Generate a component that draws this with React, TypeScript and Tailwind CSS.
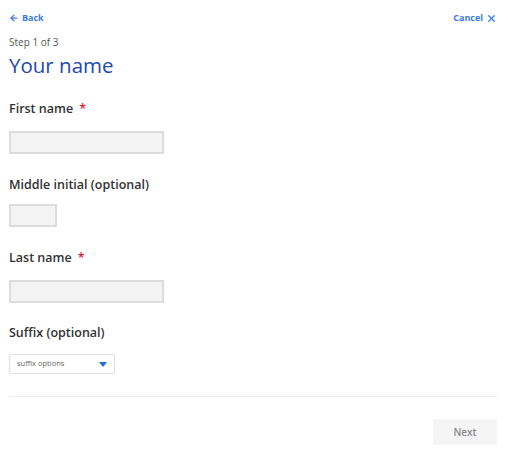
import { ArrowLeft, X } from "lucide-react"

function Label({ text, required }: { text: string; required?: boolean }) {
  return (
    <div className="text-[12.5px] font-semibold text-[#333] leading-[18px]">
      {text}
      {required && <span className="text-[#e5202e] ml-[6px]">*</span>}
    </div>
  )
}

export default function App() {
  return (
    <div
      className="w-[508px] h-[454px] bg-white px-[9px] pt-[11px] text-[#333]"
      style={{ fontFamily: '"Open Sans", sans-serif' }}
    >
      <div className="flex items-center justify-between pr-[2px] h-[14px]">
        <button className="flex items-center gap-[3px] text-[9px] font-bold text-[#3a7de6]">
          <ArrowLeft className="size-[10px]" strokeWidth={3} />
          Back
        </button>
        <button className="flex items-center gap-[3px] text-[9px] font-bold text-[#3a7de6]">
          Cancel
          <X className="size-[11px]" strokeWidth={2.75} />
        </button>
      </div>

      <div className="mt-[10px] text-[10px] leading-[14px] text-[#555]">Step 1 of 3</div>
      <h1 className="mt-[3px] text-[20.5px] leading-[26px] text-[#2347b0]">Your name</h1>

      <div className="mt-[22px]">
        <Label text="First name" required />
        <input className="mt-[13px] block w-[155px] h-[23px] bg-[#f3f3f3] border-2 border-[#dcdcdc] outline-none" />
      </div>

      <div className="mt-[22px]">
        <Label text="Middle initial (optional)" />
        <input className="mt-[10px] block w-[48px] h-[23px] bg-[#f3f3f3] border-2 border-[#dcdcdc] outline-none" />
      </div>

      <div className="mt-[22px]">
        <Label text="Last name" required />
        <input className="mt-[13px] block w-[155px] h-[23px] bg-[#f3f3f3] border-2 border-[#dcdcdc] outline-none" />
      </div>

      <div className="mt-[21px]">
        <Label text="Suffix (optional)" />
        <div className="mt-[12px] flex items-center justify-between w-[106px] h-[20px] border border-[#e0e0e0] rounded-[2px] pl-[7px] pr-[7px] bg-white">
          <span className="text-[7.5px] text-[#666]">suffix options</span>
          <svg width="8" height="5" viewBox="0 0 8 5">
            <path d="M0 0 L8 0 L4 5 Z" fill="#1f6fd6" />
          </svg>
        </div>
      </div>

      <div className="mt-[22px] mr-[2px] border-t border-[#ececec]" />

      <div className="flex justify-end mr-[2px] mt-[22px]">
        <button className="w-[64px] h-[26px] bg-[#f5f5f5] text-[10px] font-semibold text-[#8a8a8a]">
          Next
        </button>
      </div>
    </div>
  )
}
